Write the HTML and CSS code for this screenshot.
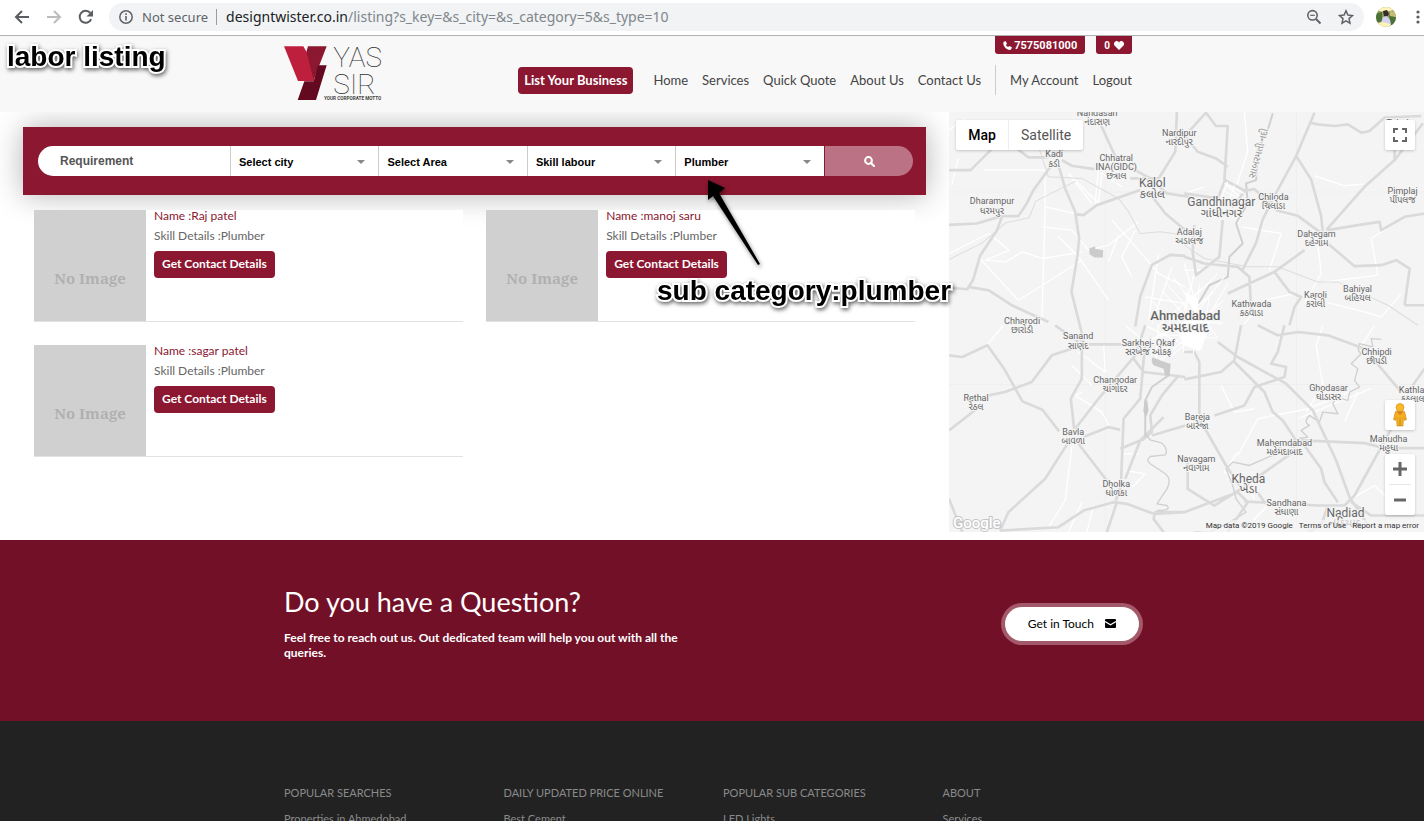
FILE: index.html
```html
<!DOCTYPE html>
<html lang="en">
<head>
<meta charset="utf-8">
<title>Yas Sir - Listing</title>
<link rel="stylesheet" href="styles.css">
</head>
<body>
<div class="browser-bar">
  <button class="bar-icon" aria-label="Back"><svg width="16" height="16" viewBox="0 0 16 16"><path d="M15 8H2M8 2L2 8l6 6" fill="none" stroke="#5a5d61" stroke-width="2"/></svg></button>
  <button class="bar-icon" aria-label="Forward"><svg width="16" height="16" viewBox="0 0 16 16"><path d="M1 8h13M8 2l6 6-6 6" fill="none" stroke="#bcbdbf" stroke-width="2"/></svg></button>
  <button class="bar-icon" aria-label="Reload"><svg width="16" height="16" viewBox="0 0 16 16"><path d="M13.2 10.200A6 6 0 1 1 12.300 4" fill="none" stroke="#5a5d61" stroke-width="2"/><path d="M15 1v6.500H8.500z" fill="#5a5d61"/></svg></button>
  <div class="omnibox">
    <svg width="14" height="14" viewBox="0 0 14 14"><circle cx="7" cy="7" r="6.200" fill="none" stroke="#5f6368" stroke-width="1.500"/><path d="M7 6v4.500M7 3.300v1.600" stroke="#5f6368" stroke-width="1.600"/></svg>
    <span class="insecure">Not secure</span>
    <span class="url"><b>designtwister.co.in</b>/listing?s_key=&amp;s_city=&amp;s_category=5&amp;s_type=10</span>
    <button class="bar-icon" aria-label="Zoom"><svg width="16" height="16" viewBox="0 0 16 16"><circle cx="6.500" cy="6.300" r="4.700" fill="none" stroke="#5f6368" stroke-width="1.600"/><path d="M10 10l4.500 4.500" stroke="#5f6368" stroke-width="2"/><path d="M4.200 6.300h4.600" stroke="#5f6368" stroke-width="1.200"/></svg></button>
    <button class="bar-icon" aria-label="Bookmark"><svg width="16" height="16" viewBox="0 0 16 16"><path d="M8 1.800l1.900 4.300 4.600.400-3.500 3.100 1 4.600L8 11.800l-4 2.400 1-4.600L1.500 6.500l4.600-.400z" fill="none" stroke="#5f6368" stroke-width="1.500"/></svg></button>
  </div>
  <svg class="avatar" width="20" height="20" viewBox="0 0 20 20"><defs><clipPath id="face"><circle cx="10" cy="10" r="10"/></clipPath></defs><g clip-path="url(#face)"><path fill="#8d9c58" d="M0 0h20v20H0z"/><path fill="#fff3bd" d="M0 0h18v3L9 5 3 4z"/><path fill="#4c7138" d="M0 7l6-2v9l-6 2zM13 8l7 2v8h-5z"/><path fill="#c9ba77" d="M14 4l6 1v5l-6-1z"/><path fill="#372c2b" d="M7 4l4-1 2 4-2 3-3-1z"/><path fill="#d5d2f0" d="M7 10l4-1 3 4 1 5H7l-2-2z"/><path fill="#fff2b5" d="M2 16l5-1 7 2v3H4z"/></g></svg>
  <button class="bar-icon dots" aria-label="Menu"><svg width="4" height="16" viewBox="0 0 4 16" fill="#5a5d61"><circle cx="2" cy="3" r="1.600"/><circle cx="2" cy="8" r="1.600"/><circle cx="2" cy="13" r="1.600"/></svg></button>
</div>

<header class="site-header">
  <div class="container header-row">
    <a class="logo" href="#" aria-label="Yas Sir">
      <svg width="99" height="55" viewBox="0 0 297 165">
        <path fill="#8b1730" d="M72 1h56L95 86l-7 19-23-80z"/>
        <path fill="#be1f3d" d="M0 1h58l10 18 22 86H42z"/>
        <path fill="#630a20" d="M102 58h26L96 162H41l20-56h28z"/>
        <g class="logo-word"><text x="148" y="63">YAS</text><text x="148" y="144">SIR</text></g>
        <text class="logo-tag" x="120" y="162">YOUR CORPORATE MOTTO</text>
      </svg>
    </a>
    <div class="header-side">
      <div class="badges">
        <a class="badge phone" href="#"><svg width="9" height="9" viewBox="0 0 18 18"><path fill="#fff" d="M1 2l4-2 3 5-2 3c1 2 2 3 4 4l3-2 5 3-2 4c-3 2-8 0-11-3C1 10 0 5 1 2z"/></svg>7575081000</a>
        <a class="badge fav" href="#">0<svg width="10" height="9" viewBox="0 0 20 18"><path fill="#fff" d="M10 18L1 9C-2 4 2 0 5 0c2 0 4 1 5 3 1-2 3-3 5-3 3 0 7 4 4 9z"/></svg></a>
      </div>
      <nav class="nav">
        <a class="btn" href="#">List Your Business</a>
        <a href="#">Home</a><a href="#">Services</a><a href="#">Quick Quote</a><a href="#">About Us</a><a href="#">Contact Us</a>
        <span class="account"><a href="#">My Account</a><a href="#">Logout</a></span>
      </nav>
    </div>
  </div>
  <div class="note note-title">labor listing</div>
</header>

<main class="listing">
  <section class="results">
    <form class="search">
      <input type="text" placeholder="Requirement" aria-label="Requirement">
      <div class="pick"><select aria-label="City"><option>Select city</option></select></div>
      <div class="pick"><select aria-label="Area"><option>Select Area</option></select></div>
      <div class="pick"><select aria-label="Category"><option>Skill labour</option></select></div>
      <div class="pick"><select aria-label="Sub category"><option>Plumber</option></select></div>
      <button type="button" aria-label="Search"><svg width="11" height="11" viewBox="0 0 11 11"><circle cx="4.500" cy="4.500" r="3.400" fill="none" stroke="#fff" stroke-width="2"/><path d="M7 7l3 3" stroke="#fff" stroke-width="2.200" stroke-linecap="round"/></svg></button>
    </form>
    <div class="cards">
      <article class="card"><div class="thumb">No Image</div><div class="info"><a href="#">Name :Raj patel</a><p>Skill Details :Plumber</p><button class="btn">Get Contact Details</button></div></article>
      <article class="card"><div class="thumb">No Image</div><div class="info"><a href="#">Name :manoj saru</a><p>Skill Details :Plumber</p><button class="btn">Get Contact Details</button></div></article>
      <article class="card"><div class="thumb">No Image</div><div class="info"><a href="#">Name :sagar patel</a><p>Skill Details :Plumber</p><button class="btn">Get Contact Details</button></div></article>
    </div>
    <div class="note note-sub">sub category:plumber</div>
    <svg class="arrow" width="58" height="90" viewBox="0 0 58 90"><path d="M3 2L20 10 14 15 55 86 53 87 8 18 3 22z"/></svg>
  </section>

  <section class="map">
    <svg class="map-canvas" viewBox="0 0 474 420" preserveAspectRatio="xMinYMin slice">
      <path fill="#f4f4f4" d="M0 0h474v420H0z"/>
      <path d="M156 0v420M347 0v420M0 80h474M0 272h474" stroke="#efefef" fill="none"/>
      <g transform="translate(-4 -2) scale(.3333)">
        <path class="lane" d="M12 60l50-35M20 225l20-80M115 180l190 0M460 180l-10 100M300 200l0 100-10 340M290 350l90 10 50 60 60-15 90-70M370 190l90 90 10-90 60 40M440 280l-70-90M12 430l120-60 60 50-70 30 60 5 50-30 60 20 120-20M340 380l60 60 90 130M300 290l90 20M500 330l80 90 60 70 80 40M490 455l30-80M100 440l120 130 190-120M560 500l-30-60 40-80M600 560l120 20M640 430l-30 200M680 470l-60 170"/>
        <path class="rail" d="M12 448l100-50 70-60 70-15 20-50 120-60M280 110l30 90 100 5 110 60 30 40 35 65 60-5 75 10"/>
        <path class="road" d="M12 180h65l65-65M215 115l35 27h60M350 150l30 17 67 10M320 165l-55 75-20 40-25 38h-50l-75 22-83 4M170 322l-15 40-50 75-20 70-18 30-55-5M70 530l60 10 70 45 110 50M340 165l20 70 30 70 12 80-5 50-18 110 40 160M390 312l25 3 40-30 130-45M465 40l50 110 100 55 50 45 65 10M555 205h85l50-80 5-125M610 245l50 65 60 50M720 437l-45-3-55 30-35 95-15 90"/>
        <path class="water" d="M432 415l18-7v8l24 4-1 22h-25l-15-10z"/>
      </g>
      <g transform="translate(235 -2) scale(.3333)">
        <path class="lane" d="M180 5l10 120-35 105M390 197l90 30 55-5M0 250l60-20M170 350l120 20-35 110M400 400l10 90-50 90M420 515l160-20-20-110 90-60M650 550l-60 70-50-15-120-30M120 220l70 60-30 60M0 460l40 140M0 480h60M0 600l30-110M180 640l60-70 90-20"/>
        <path class="rail" d="M0 405l60 40 130 25 90 0 120 45 60 0 150 70 90 60"/>
        <path class="river" d="M265 10l-15 50-30 60-5 90-30 10 5 60-35 60 20 60-40 40-5 60-55 25-60 100"/>
        <path class="road" d="M0 80l65-72 30 40h35L120 210M0 75l40 50 55 20 35 25M0 250l100 15 22-55 60 32-40 50M180 242l30-5 70 65 60 15 75 55M390 8l-55 130-60 110-40 80-20 70-40 80M335 138l45 70 30 110 5 50M375 38l25 5 50 5 40-5 40 25 25-5 45-40 110-5M715 40l-85 110-90 80-115 130M430 360l90-15 65-10 5 25 70-40 60-10M430 400l80 68 80-3 45-15 40 25-15 110M660 585h60M130 550l140-65 90-65M270 485l45 60 35 15-20 30-15 55M115 330l-10 110-70 55-10-70 5-80M0 440l60 20 100 10 35 30 5 100M630 150v-60"/>
        <path class="grid-lane" d="M120 220l60 30M115 240l60 30M130 215l-20 50M150 225l-20 60M0 590l100-100M10 640l110-140M60 640l70-120M0 610l120 30"/>
      </g>
      <g transform="translate(-4 213) scale(.3333)">
        <path class="lane" d="M125 60l50-60M400 80l80 60-5-90M410 200l-20 10 80 50 20 40M380 365l-20 160-50 80M440 180l-60-60M530 385h50M540 435l60 10-40 40M540 0l60 50 90-40M600 0l120 60M640 0l-10 120 90-80M370 620l40-90M445 540l-20 80"/>
        <path class="road" d="M12 90l40 5 75-35 50 70 55 98 60 25 50 65M12 315l90-70M130 210l50-10 80-30 60-80 60-20M430 57l110 0M410 30v130l-33 60 10 90M390 310l70-90 110-130 30-90M330 0l70 50M415 335l75-30 35 8M600 50l-15 170-50 60-8 200-15 45M400 355l100 130M370 350l-70 110-110 100-25 55M165 615l175-10 75-50 90-25 40 5 80 30 95-5M515 530l-30 90M540 460l45-115 70-70M565 100l30 40 125 15M620 330l100-30M12 520l40 100M720 560h-90l-5 20 30 40M525 370l60-25"/>
        <path class="road" d="M700 150l-50 60-35 60 5 50-30 25"/>
        <path class="river" d="M670 150l-50 35-20 40 0 110"/>
        <path class="water" d="M622 96l30 12 24 8-3 36-14-2-4-20-30-10q-10-12-3-24zM598 225l8 0 4 30-8 22-8-20z"/>
        <path class="river thin" d="M600 325l15 18 35 10q20 20 10 35l-45 5q-15 10 0 22l45 30q20 15 5 45l-30 45 30 5q15 15-30 15"/>
      </g>
      <g transform="translate(235 213) scale(.3333)">
        <path class="lane" d="M570 0l-40 60M415 0l-20 60 20 120-50 80M160 380l-40 60 60 30 30 50M110 180l40 80 60-10M480 290l40-90M160 390l60-110 150-30 150-60M340 280l220-90M500 520l70-40 50 50M170 620l90-90"/>
        <path class="river thin" d="M590 42l-30-2 5 25-40-10q-10 20 5 30l-30 30 20 15-10 35 15 20-30 15-5 25-35-10-10 20 15 30-45-5-10 30-30-20q-20 20 0 30l-25 15 20 20-30 5-10 25-40-5-15 25-80 35-50-10-20 20 20 50 10 40 30 40-50 30-60 30-45 0-25 50"/>
        <path class="road" d="M0 80h30l15 30v170l80 140 40 60M0 162l110-22 40-35 20-105M100 50l60 45 145 80 80 80 70 150 40 110 60 90M150 110l90 90 25 60 30 25 40 60M360 360l50 70 10 40 40 60M220 0l60 30 60-10 90 10 110 40 110 130M300 0l-20 80-20 35 45 10-5 30-90 30-30 55-90 30M350 345l190 8 60 15h120M620 310l-110 200-30 30-80 0-220-12M10 410v80l80 50 80-50 170-120M0 560l160-60 30 30-60 90M220 500l20 30M430 540l-20 60-40 20M500 530l60 40h160M670 200l50-70"/>
      </g>
      <path class="streets" d="M212 178l40 42M216 170l46 52M224 165l44 60M204 190l34 40M210 226l54-46M216 238l58-50M208 214l50-42M222 244l50-44M238 176l-4 64M250 172l-6 70M260 184l-8 54M206 200l66 12M208 222l60 4"/>
      <path class="streets core" d="M228 214l18-12 14 14-10 22-16-6zM234 180l14 6v20"/>
      <g class="place">
        <text x="148" y="4">Nandasan<tspan x="148" dy="9">નંદાસણ</tspan></text>
        <text x="230" y="24">Nardipur<tspan x="230" dy="9">નારદીપુર</tspan></text>
        <text x="105" y="45">Kadi<tspan x="105" dy="10">કડી</tspan></text>
        <text x="167" y="49">Chhatral<tspan x="167" dy="9">INA(GIDC)</tspan><tspan x="167" dy="9">છત્રાલ</tspan></text>
        <text class="town" x="203" y="75">Kalol<tspan x="203" dy="11">કલોલ</tspan></text>
        <text x="43" y="92">Dharampur<tspan x="43" dy="10">ધરમપુર</tspan></text>
        <text x="240" y="123">Adalaj<tspan x="240" dy="9">અડાલજ</tspan></text>
        <text class="town" x="272" y="94">Gandhinagar<tspan x="272" dy="11">ગાંધીનગર</tspan></text>
        <text x="324" y="88">Chiloda<tspan x="324" dy="9">ચિલોડા</tspan></text>
        <text x="453" y="82">Pimplaj<tspan x="453" dy="9">પીંપલજ</tspan></text>
        <text x="367" y="125">Dahegam<tspan x="367" dy="9">દહેગામ</tspan></text>
        <text x="302" y="195">Kathwada<tspan x="302" dy="9">કઠવાડા</tspan></text>
        <text x="366" y="186">Karoli<tspan x="366" dy="9">કરોલી</tspan></text>
        <text x="408" y="180">Bahiyal<tspan x="408" dy="9">બહિયલ</tspan></text>
        <text class="city" x="236" y="208">Ahmedabad<tspan x="236" dy="12">અમદાવાદ</tspan></text>
        <text x="73" y="212">Chharodi<tspan x="73" dy="9">છારોડી</tspan></text>
        <text x="129" y="227">Sanand<tspan x="129" dy="10">સાણંદ</tspan></text>
        <text x="199" y="234">Sarkhej- Okaf<tspan x="199" dy="9">સરખેજ ઓકફ</tspan></text>
        <text x="166" y="271">Changodar<tspan x="166" dy="9">ચાંગોદર</tspan></text>
        <text x="27" y="289">Rethal<tspan x="27" dy="9">રેઠલ</tspan></text>
        <text x="124" y="323">Bavla<tspan x="124" dy="9">બાવળા</tspan></text>
        <text x="248" y="308">Bareja<tspan x="248" dy="9">બારેજા</tspan></text>
        <text x="247" y="350">Navagam<tspan x="247" dy="9">નવાગામ</tspan></text>
        <text x="167" y="374">Dholka<tspan x="167" dy="9">ધોળકા</tspan></text>
        <text class="town" x="299" y="370">Kheda<tspan x="299" dy="10">ખેડા</tspan></text>
        <text x="335" y="334">Mahemdabad<tspan x="335" dy="9">મહેમદાબાદ</tspan></text>
        <text x="379" y="279">Ghodasar<tspan x="379" dy="9">ઘોડાસર</tspan></text>
        <text x="427" y="243">Chhipdi<tspan x="427" dy="9">છીપડી</tspan></text>
        <text x="463" y="281">Kathlal<tspan x="463" dy="9">કઠલાલ</tspan></text>
        <text x="439" y="330">Mahudha<tspan x="439" dy="9">મહુધા</tspan></text>
        <text x="337" y="393">Sandhana<tspan x="337" dy="9">સંધાણા</tspan></text>
        <text class="town" x="396" y="404">Nadiad<tspan x="396" dy="10">નડિયાદ</tspan></text>
        <text x="448" y="14">Talod</text>
        <text class="river-name" transform="translate(312 42) rotate(-75)">સાબરમતી નદી</text>
      </g>
      <text class="google" x="4" y="415">Google</text>
    </svg>
    <div class="map-types"><button class="on">Map</button><button>Satellite</button></div>
    <button class="map-btn fullscreen" aria-label="Fullscreen"><svg width="14" height="14" viewBox="0 0 14 14"><path d="M1 5V1h4M9 1h4v4M13 9v4H9M5 13H1V9" fill="none" stroke="#666" stroke-width="2"/></svg></button>
    <div class="map-tools">
      <button class="map-btn" aria-label="Street View"><svg width="14" height="24" viewBox="0 0 14 24"><path fill="#f4ad1d" stroke="#c78a1c" stroke-width=".6" d="M2.500 8.500h9l2 8-2 1-1-3-.5 8.500H4l-.5-8.500-1 3-2-1z"/><path fill="#e07c25" d="M3.500 8.500h7L7 12z"/><circle cx="7" cy="4.500" r="4" fill="#fbb829" stroke="#c78a1c" stroke-width=".6"/><path d="M7 15v8" stroke="#c78a1c"/></svg></button>
      <div class="zoomer">
        <button aria-label="Zoom in"><svg width="14" height="14" viewBox="0 0 14 14"><path d="M7 0v14M0 7h14" stroke="#666" stroke-width="3"/></svg></button>
        <button aria-label="Zoom out"><svg width="14" height="14" viewBox="0 0 14 14"><path d="M1 7h12" stroke="#666" stroke-width="3"/></svg></button>
      </div>
    </div>
    <div class="credits"><span>Map data ©2019 Google</span><a href="#">Terms of Use</a><a href="#">Report a map error</a></div>
  </section>
</main>

<section class="cta">
  <div class="container cta-row">
    <div class="cta-copy"><h2>Do you have a Question?</h2><p>Feel free to reach out us. Out dedicated team will help you out with all the queries.</p></div>
    <a class="touch" href="#">Get in Touch<svg width="11" height="9" viewBox="0 0 11 9"><path fill="#000" d="M0 1q0-1 1-1h9q1 0 1 1v7q0 1-1 1H1q-1 0-1-1z"/><path d="M0 2.500l5.500 3.300L11 2.500" fill="none" stroke="#fff" stroke-width="1.200"/></svg></a>
  </div>
</section>

<footer class="footer">
  <div class="container footer-grid">
    <div><h3>POPULAR SEARCHES</h3><a href="#">Properties in Ahmedobad</a></div>
    <div><h3>DAILY UPDATED PRICE ONLINE</h3><a href="#">Best Cement</a></div>
    <div><h3>POPULAR SUB CATEGORIES</h3><a href="#">LED Lights</a></div>
    <div><h3>ABOUT</h3><a href="#">Services</a></div>
  </div>
</footer>
</body>
</html>
```
FILE: styles.css
```css
* { box-sizing: border-box; }
html, body { height: 100%; }
body {
  margin: 0;
  display: flex;
  flex-direction: column;
  overflow: hidden;
  background: #fff;
  color: #444;
  font: 12px/15px Lato, "Open Sans", sans-serif;
}
a { color: inherit; text-decoration: none; }
button { border: 0; padding: 0; font: inherit; cursor: pointer; }
svg { display: block; flex: none; }
h2, h3, p { margin: 0; }
.container { width: 100%; max-width: 878px; margin: 0 auto; padding: 0 11px; }

/* Browser toolbar */
.browser-bar {
  flex: none;
  display: flex;
  align-items: center;
  gap: 16px;
  height: 36px;
  padding: 0 4px 2px 14px;
  border-bottom: 1px solid #b3b3b3;
  font: 13px/20px "Noto Sans", sans-serif;
}
.bar-icon { background: none; }
.omnibox {
  flex: 1;
  display: flex;
  align-items: center;
  gap: 16px;
  height: 28px;
  margin: 0 -4px 0 -1px;
  padding: 0 10px 0 10px;
  border-radius: 14px;
  background: #f1f3f4;
}
.insecure { margin-left: -7px; padding-right: 8px; border-right: 1px solid #9a9da0; color: #5f6368; line-height: 16px; }
.url { flex: 1; margin-left: -7px; color: #80868b; white-space: nowrap; font-size: 14px; }
.url b { font-weight: 400; color: #202124; }
.dots { margin-left: 4px; }

/* Site header */
.site-header { flex: none; position: relative; z-index: 2; background: #f8f8f8; }
.header-row { display: flex; justify-content: space-between; align-items: flex-start; height: 76px; }
.logo { margin-top: 10px; }
.logo-word { font: 100 84px Roboto, sans-serif; fill: #333; }
.logo-tag { font: 700 14px Roboto, sans-serif; fill: #444; }
.header-side { display: flex; flex-direction: column; align-items: flex-end; gap: 11px; padding-right: 8px; }
.badges { display: flex; gap: 11px; color: #fff; font: 700 11px/15px Roboto, sans-serif; }
.badge { display: flex; align-items: center; gap: 3px; height: 18px; padding: 0 8px; border-radius: 0 0 3px 3px; background: #8b1730; }
.phone { gap: 2px; }
.fav { font-size: 10px; gap: 4px; }
.nav { display: flex; align-items: center; gap: 14px; font-size: 13px; line-height: 27px; }
.btn { display: block; padding: 0 8px 1px; border-radius: 4px; background: #8b1730; color: #fff; font-weight: 700; line-height: 26px; }
.nav .btn { margin-right: 6px; padding: 0 6px 1px; }
.account { display: flex; gap: 14px; padding-left: 14px; border-left: 1px solid #ccc; line-height: 30px; }

/* Listing */
.listing { flex: none; display: grid; grid-template-columns: 2fr 1fr; padding-bottom: 8px; }
.results { position: relative; padding: 15px 23px; }
.search {
  display: grid;
  grid-template-columns: 386fr repeat(4, 297fr) 177fr;
  padding: 19px 13px 19px 15px;
  background: #8b1730;
  box-shadow: 0 0 30px rgba(0, 0, 0, .3);
}
.search > * { min-width: 0; height: 30px; }
.search input {
  width: 100%;
  border: 0;
  border-right: 1px solid #ccc;
  border-radius: 15px 0 0 15px;
  padding: 0 22px;
  font: 700 12px "Liberation Sans", Arial, sans-serif;
  color: #555;
}
.search input::placeholder { color: #555; opacity: 1; }
.pick { position: relative; border-right: 1px solid #ccc; background: #fff; }
.pick:nth-of-type(4) { border-right-color: #8b1730; }
.pick select {
  appearance: none;
  width: 100%;
  height: 100%;
  border: 0;
  padding: 2px 24px 0 8px;
  background: none;
  color: #000;
  font: 700 11px "Liberation Sans", Arial, sans-serif;
}
.pick::after {
  content: "";
  position: absolute;
  top: 14px;
  right: 13px;
  border: 4px solid transparent;
  border-top-color: #888;
  border-bottom: 0;
}
.search button { display: grid; place-items: center; border-radius: 0 15px 15px 0; background: #bb7284; }
.cards { display: grid; grid-template-columns: 1fr 1fr; gap: 23px; padding: 15px 11px 0; }
.card { position: relative; display: flex; gap: 8px; border-bottom: 1px solid #e2e2e2; background: #fff; }
.thumb {
  display: grid;
  place-items: center;
  width: 112px;
  height: 111px;
  padding-top: 25px;
  background: #d0d0d0;
  color: #b0b0b0;
  font: 700 15px "Noto Serif", "DejaVu Serif", "Liberation Serif", serif;
  white-space: nowrap;
}
.info { display: flex; flex-direction: column; align-items: flex-start; line-height: 20px; margin-top: -4px; color: #666; }
.info a { color: #8b1730; }
.info .btn { margin-top: 5px; }

/* Annotations */
.note {
  position: absolute;
  font: 700 28px/32px "Liberation Sans", Arial, sans-serif;
  color: #000;
  white-space: nowrap;
  -webkit-text-stroke: 4px #fff;
  paint-order: stroke fill;
  filter: drop-shadow(1px 2px 2px rgba(0, 0, 0, .6));
}
.note-title { left: 7px; top: 5px; }
.note-sub { left: 657px; top: 163px; z-index: 3; }
.arrow { position: absolute; left: 705px; top: 66px; z-index: 3; filter: drop-shadow(1px 2px 2px rgba(0, 0, 0, .5)); }

/* Map */
.map { position: relative; height: 420px; overflow: hidden; background: #f4f4f4; font-family: Roboto, sans-serif; }
.map-canvas { width: 100%; height: 100%; }
.road { fill: none; stroke: #dadada; stroke-width: 8; stroke-linejoin: round; }
.lane { fill: none; stroke: #fff; stroke-width: 4; stroke-linejoin: round; }
.grid-lane { fill: none; stroke: #fff; stroke-width: 3; }
.streets { fill: none; stroke: #fff; stroke-width: 1; }
.core { fill: #fff; }
.rail { fill: none; stroke: #ddd; stroke-width: 3; }
.river { fill: none; stroke: #d0d0d0; stroke-width: 6; stroke-linejoin: round; }
.river.thin { stroke-width: 4; }
.water { fill: #cbcbcb; }
.place { fill: #666; font: 9px Roboto, "Noto Sans Gujarati", sans-serif; text-anchor: middle; stroke: #f4f4f4; stroke-width: 2; paint-order: stroke; }
.town { font-size: 12px; }
.city { font-size: 13px; font-weight: 500; }
.river-name { fill: #999; font-size: 10px; }
.google { fill: #fff; stroke: #c4c4c4; stroke-width: 2; paint-order: stroke; font: 500 15px Roboto, sans-serif; }
.map-types { position: absolute; left: 7px; top: 8px; display: flex; border-radius: 2px; background: #fff; box-shadow: 0 1px 3px rgba(0, 0, 0, .2); }
.map-types button { height: 30px; padding: 0 12px; background: none; color: #565656; font-size: 14px; }
.map-types .on { border-right: 1px solid #eee; color: #000; font-weight: 500; }
.map-btn { display: grid; place-items: center; width: 30px; height: 30px; border-radius: 2px; background: #fff; box-shadow: 0 1px 3px rgba(0, 0, 0, .2); }
.fullscreen { position: absolute; right: 9px; top: 8px; }
.map-tools { position: absolute; right: 9px; bottom: 17px; display: grid; gap: 24px; }
.zoomer { display: grid; padding: 0 4px; border-radius: 2px; background: #fff; box-shadow: 0 1px 3px rgba(0, 0, 0, .2); }
.zoomer button { display: grid; place-items: center; height: 30px; background: none; }
.zoomer button + button { border-top: 1px solid #e6e6e6; height: 31px; }
.credits { position: absolute; right: 0; bottom: 0; display: flex; gap: 6px; padding: 0 5px; background: rgba(245, 245, 245, .7); color: #333; font-size: 8px; line-height: 12px; }

/* Call to action */
.cta { flex: none; background: #721027; color: #fff; padding: 46px 0 61px; }
.cta-row { display: flex; justify-content: space-between; align-items: flex-start; }
.cta-copy { max-width: 430px; font-weight: 700; }
.cta h2 { margin-bottom: 12px; font-size: 27px; line-height: 32px; font-weight: 400; }
.touch { display: flex; align-items: center; gap: 11px; height: 34px; margin: 21px 1px 0 0; padding: 0 23px 2px; border-radius: 17px; background: #fff; box-shadow: 0 0 0 4px #a4596a; color: #000; }

/* Footer */
.footer { flex: 1 0 auto; background: #222; padding-top: 64px; color: #8a8a8a; font-size: 11px; line-height: 16px; }
.footer-grid { display: grid; grid-template-columns: repeat(4, 1fr); gap: 22px; }
.footer h3 { margin-bottom: 10px; font-size: 11px; font-weight: 400; white-space: nowrap; }
```
